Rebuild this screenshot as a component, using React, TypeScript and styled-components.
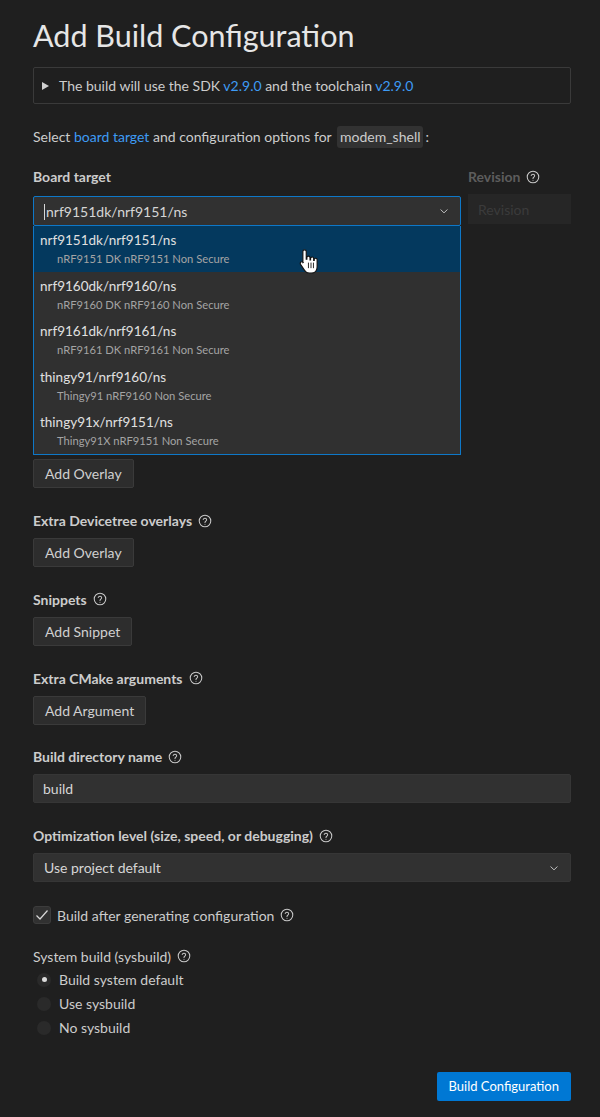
import styled, { createGlobalStyle } from "styled-components";

const GlobalStyle = createGlobalStyle`
    html, body {
        margin: 0;
        background: #1f1f1f;
    }
    body {
        font-family: "Lato", "Noto Sans", sans-serif;
        font-size: 14px;
        color: #cccccc;
    }
`;

const Page = styled.div`
    padding: 17px 29px 18px 33px;
    min-height: 1117px;
    box-sizing: border-box;
`;

const Title = styled.h1`
    margin: 0 0 14px;
    font-size: 30.5px;
    line-height: 36px;
    font-weight: 400;
    color: #e6e6e6;
`;

const InfoBox = styled.div`
    display: flex;
    align-items: center;
    gap: 10px;
    height: 37px;
    box-sizing: border-box;
    padding: 0 8px;
    border: 1px solid #3a3a3a;
    border-radius: 2px;
`;

const Triangle = styled.span`
    width: 0;
    height: 0;
    border-top: 4.5px solid transparent;
    border-bottom: 4.5px solid transparent;
    border-left: 7px solid #d0d0d0;
`;

const Link = styled.span`
    color: #3e9bf4;
`;

const Intro = styled.p`
    margin: 22px 0 20px;
    line-height: 22px;
`;

const Code = styled.span`
    display: inline-block;
    background: #323232;
    border-radius: 3px;
    padding: 0 3px;
    margin: 0 2px;
    line-height: 22px;
`;

const Form = styled.div`
    display: flex;
    flex-direction: column;
    gap: 23.8px;
`;

const Section = styled.div<{ $extraTop?: number }>`
    display: flex;
    flex-direction: column;
    align-items: flex-start;
    gap: 9px;
    margin-top: ${(p) => p.$extraTop ?? 0}px;
`;

const Label = styled.div<{ $bold?: boolean; $muted?: boolean }>`
    display: flex;
    align-items: center;
    gap: 6px;
    height: 17px;
    font-weight: ${(p) => (p.$bold === false ? 400 : 700)};
    color: ${(p) => (p.$muted ? "#5d5d5d" : "#cccccc")};
`;

const BoardRow = styled.div`
    display: grid;
    grid-template-columns: 428px 1fr;
    column-gap: 7px;
`;

const Field = styled.div`
    position: relative;
    display: flex;
    flex-direction: column;
    gap: 11px;
`;

const SelectBox = styled.div<{ $focused?: boolean }>`
    display: flex;
    align-items: center;
    justify-content: space-between;
    height: ${(p) => (p.$focused ? 30 : 29)}px;
    box-sizing: border-box;
    width: 100%;
    padding: 0 10px;
    background: #313131;
    border: 1px solid ${(p) => (p.$focused ? "#0e78c8" : "#363636")};
    border-radius: 2px;
    color: #d6d6d6;
`;

const Caret = styled.span`
    display: inline-block;
    width: 1px;
    height: 16px;
    background: #d6d6d6;
    margin-right: 1px;
    vertical-align: -3px;
`;

const DisabledInput = styled.div`
    height: 30px;
    box-sizing: border-box;
    padding: 0 10px;
    display: flex;
    align-items: center;
    background: #262626;
    color: #3b3b3b;
    margin-top: -2px;
`;

const TextInput = styled.div`
    width: 100%;
    height: 29px;
    box-sizing: border-box;
    padding: 0 9px;
    display: flex;
    align-items: center;
    background: #313131;
    border: 1px solid #363636;
    border-radius: 2px;
    color: #d6d6d6;
`;

const Dropdown = styled.ul`
    position: absolute;
    top: 100%;
    left: 0;
    right: 0;
    margin: 0;
    padding: 0;
    list-style: none;
    background: #303030;
    border: 1px solid #0e78c8;
    border-top: none;
    z-index: 5;
`;

const Option = styled.li<{ $active?: boolean }>`
    position: relative;
    height: 45.6px;
    padding: 5px 6px 0;
    box-sizing: border-box;
    background: ${(p) => (p.$active ? "#04395e" : "transparent")};
`;

const OptionTitle = styled.div`
    font-size: 13.5px;
    line-height: 18px;
    color: #e0e0e0;
`;

const OptionSub = styled.div`
    font-size: 11.2px;
    line-height: 20px;
    padding-left: 17px;
    color: #a4a4a4;
`;

const Pointer = styled.svg`
    position: absolute;
    left: 265px;
    top: 22px;
`;

const Button = styled.button`
    height: 29px;
    padding: 0 11px;
    background: #2d2d2d;
    border: 1px solid #3a3a3a;
    border-radius: 2px;
    color: #d0d0d0;
    font-family: inherit;
    font-size: 14px;
`;

const CheckRow = styled.label`
    display: flex;
    align-items: center;
    gap: 6px;
    height: 18px;
`;

const CheckBox = styled.span`
    width: 18px;
    height: 18px;
    box-sizing: border-box;
    border: 1px solid #3c3c3c;
    background: #313131;
    border-radius: 3px;
    display: flex;
    align-items: center;
    justify-content: center;
`;

const RadioGroup = styled.div`
    display: flex;
    flex-direction: column;
    margin-top: 3px;
`;

const RadioRow = styled.label`
    display: flex;
    align-items: center;
    gap: 8px;
    height: 24px;
    padding-left: 4px;
`;

const Radio = styled.span<{ $checked?: boolean }>`
    width: 14px;
    height: 14px;
    border-radius: 50%;
    background: #2a2a2a;
    display: flex;
    align-items: center;
    justify-content: center;
    &::after {
        content: "";
        width: 5px;
        height: 5px;
        border-radius: 50%;
        background: ${(p) => (p.$checked ? "#dcdcdc" : "transparent")};
    }
`;

const Footer = styled.div`
    display: flex;
    justify-content: flex-end;
    margin-top: 8px;
`;

const PrimaryButton = styled.button`
    height: 29px;
    padding: 0 12px;
    background: #0078d4;
    border: none;
    border-radius: 2px;
    color: #ffffff;
    font-family: inherit;
    font-size: 13px;
`;

function Help() {
    return (
        <svg width="14" height="14" viewBox="0 0 16 16" fill="none" stroke="#c8c8c8" strokeWidth="1.2">
            <circle cx="8" cy="8" r="6.6" />
            <path d="M6 6.2a2 2 0 0 1 3.9.4c0 1.4-1.9 1.5-1.9 3" strokeLinecap="round" />
            <circle cx="8" cy="11.7" r="0.6" fill="#c8c8c8" stroke="none" />
        </svg>
    );
}

function Chevron() {
    return (
        <svg width="12" height="12" viewBox="0 0 16 16" fill="none" stroke="#c8c8c8" strokeWidth="1.3">
            <path d="M3.5 6l4.5 4.5L12.5 6" />
        </svg>
    );
}

const boards = [
    { id: "nrf9151dk/nrf9151/ns", name: "nRF9151 DK nRF9151 Non Secure" },
    { id: "nrf9160dk/nrf9160/ns", name: "nRF9160 DK nRF9160 Non Secure" },
    { id: "nrf9161dk/nrf9161/ns", name: "nRF9161 DK nRF9161 Non Secure" },
    { id: "thingy91/nrf9160/ns", name: "Thingy91 nRF9160 Non Secure" },
    { id: "thingy91x/nrf9151/ns", name: "Thingy91X nRF9151 Non Secure" },
];

function App() {
    return (
        <Page>
            <GlobalStyle />
            <Title>Add Build Configuration</Title>
            <InfoBox>
                <Triangle />
                <span>
                    The build will use the SDK <Link>v2.9.0</Link> and the toolchain <Link>v2.9.0</Link>
                </span>
            </InfoBox>
            <Intro>
                Select <Link>board target</Link> and configuration options for <Code>modem_shell</Code>:
            </Intro>

            <Form>
                <BoardRow>
                    <Field>
                        <Label>Board target</Label>
                        <SelectBox $focused>
                            <span>
                                <Caret />
                                nrf9151dk/nrf9151/ns
                            </span>
                            <Chevron />
                        </SelectBox>
                        <Dropdown>
                            {boards.map((b, i) => (
                                <Option key={b.id} $active={i === 0}>
                                    <OptionTitle>{b.id}</OptionTitle>
                                    <OptionSub>{b.name}</OptionSub>
                                    {i === 0 && (
                                        <Pointer width="20" height="27" viewBox="0 0 18 24">
                                            <path
                                                d="M5 1.5c.9 0 1.5.6 1.5 1.5v7h.6V8.6c0-.8.6-1.4 1.4-1.4s1.4.6 1.4 1.4v2h.5V9.4c0-.8.6-1.4 1.4-1.4s1.4.6 1.4 1.4v1.6h.5v-.6c0-.8.6-1.3 1.3-1.3s1.3.6 1.3 1.3V17c0 3-2 5.5-5.3 5.5H9.2c-2 0-3.2-1-4.2-2.5L1.4 14.6c-.5-.8-.3-1.7.4-2.1.7-.4 1.5-.2 2 .4l-.3.1V3c0-.9.6-1.5 1.5-1.5z"
                                                fill="#ffffff"
                                                stroke="#111"
                                                strokeWidth="1"
                                            />
                                            <path d="M8.5 13v5M10.8 13v5M13 13v5" stroke="#111" strokeWidth="0.8" />
                                        </Pointer>
                                    )}
                                </Option>
                            ))}
                        </Dropdown>
                    </Field>
                    <Field>
                        <Label $muted>
                            Revision <Help />
                        </Label>
                        <DisabledInput>Revision</DisabledInput>
                    </Field>
                </BoardRow>

                {/* the rest of this section lies under the open board list */}
                <Section $extraTop={209.5}>
                    <Button>Add Overlay</Button>
                </Section>
                <Section>
                    <Label>
                        Extra Devicetree overlays <Help />
                    </Label>
                    <Button>Add Overlay</Button>
                </Section>
                <Section>
                    <Label>
                        Snippets <Help />
                    </Label>
                    <Button>Add Snippet</Button>
                </Section>
                <Section>
                    <Label>
                        Extra CMake arguments <Help />
                    </Label>
                    <Button>Add Argument</Button>
                </Section>
                <Section>
                    <Label>
                        Build directory name <Help />
                    </Label>
                    <TextInput>build</TextInput>
                </Section>
                <Section>
                    <Label>
                        Optimization level (size, speed, or debugging) <Help />
                    </Label>
                    <SelectBox>
                        <span>Use project default</span>
                        <Chevron />
                    </SelectBox>
                </Section>
                <CheckRow>
                    <CheckBox>
                        <svg width="16" height="16" viewBox="0 0 16 16" fill="none" stroke="#d8d8d8" strokeWidth="1.2">
                            <path d="M2.5 8.5l3.5 3.5 7.5-8.5" />
                        </svg>
                    </CheckBox>
                    Build after generating configuration <Help />
                </CheckRow>
                <div>
                    <Label $bold={false}>
                        System build (sysbuild) <Help />
                    </Label>
                    <RadioGroup>
                        <RadioRow>
                            <Radio $checked />
                            Build system default
                        </RadioRow>
                        <RadioRow>
                            <Radio />
                            Use sysbuild
                        </RadioRow>
                        <RadioRow>
                            <Radio />
                            No sysbuild
                        </RadioRow>
                    </RadioGroup>
                </div>
                <Footer>
                    <PrimaryButton>Build Configuration</PrimaryButton>
                </Footer>
            </Form>
        </Page>
    );
}

export default App;
